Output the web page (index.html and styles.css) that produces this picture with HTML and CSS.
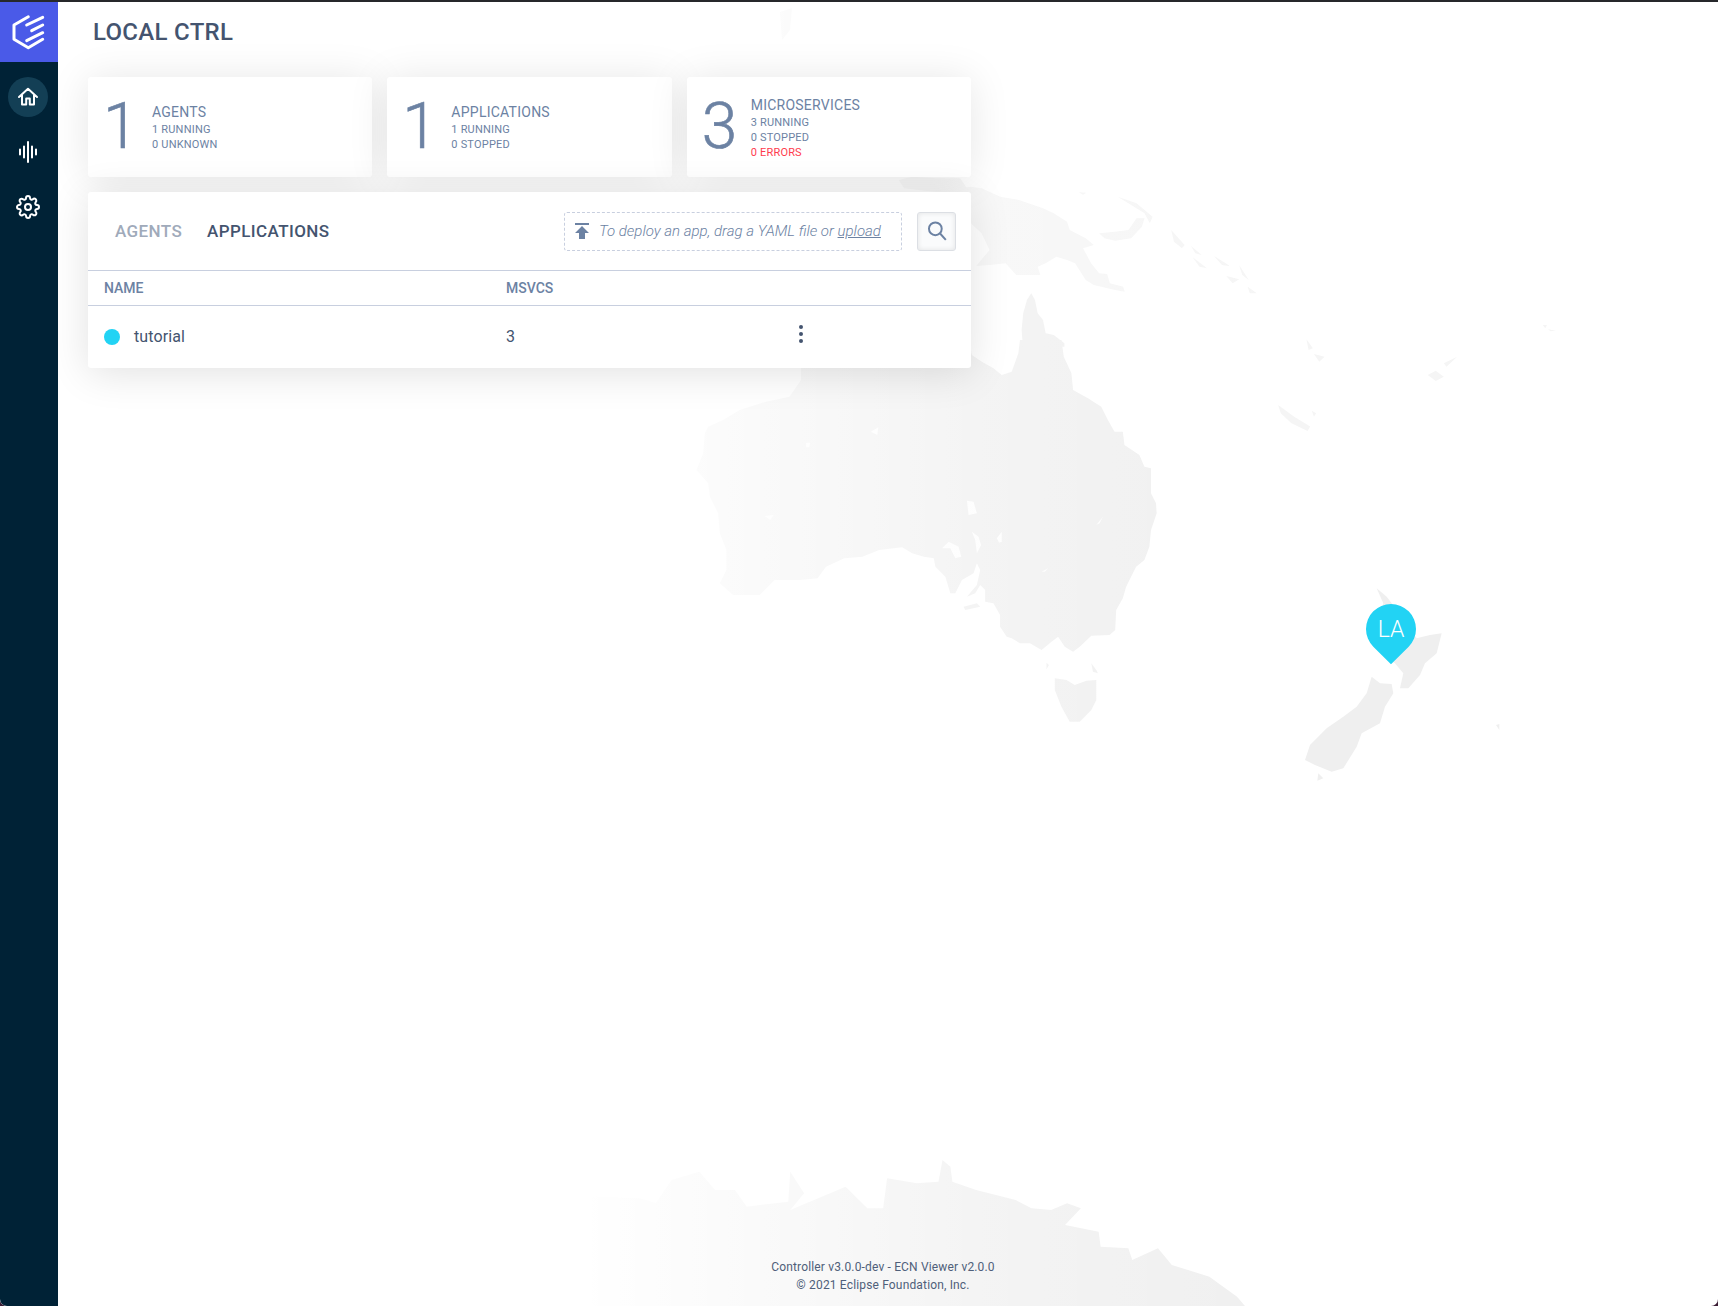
FILE: index.html
```html
<!DOCTYPE html>
<html lang="en">
<head>
  <meta charset="UTF-8">
  <title>ECN Viewer</title>
  <link rel="stylesheet" href="styles.css">
</head>
<body>

<div class="app">

  <!-- Sidebar -->
  <nav class="sidebar">
    <div class="logo">
      <svg width="58" height="60" viewBox="0 2 58 60">
        <path d="M28.3 16.7L14 25v14.3l14.3 8.4 14.4-8.4M26.7 25l16-7.7M31.7 30.7l11-5.7M26.7 40.7l16-8" />
      </svg>
    </div>
    <div class="nav-item active">
      <svg width="40" height="40" viewBox="0 0 40 40">
        <path d="M11 20l9-8.2 9 8.2M14 18v9.5h4.2v-6h3.6v6H26V18" />
      </svg>
    </div>
    <div class="nav-item">
      <svg width="40" height="40" viewBox="0 0 40 40">
        <path d="M12 17.5v5M16 14.500v11M20 10v20M24 14.500v11M28 17.500v5" />
      </svg>
    </div>
    <div class="nav-item">
      <svg width="24" height="24" viewBox="0 0 24 24">
        <circle cx="12" cy="12" r="3" />
        <path d="M19.4 15a1.65 1.65 0 0 0 .33 1.82l.06.06a2 2 0 0 1 0 2.83 2 2 0 0 1-2.83 0l-.06-.06a1.65 1.65 0 0 0-1.82-.33 1.65 1.65 0 0 0-1 1.51V21a2 2 0 0 1-2 2 2 2 0 0 1-2-2v-.09A1.65 1.65 0 0 0 9 19.4a1.65 1.65 0 0 0-1.82.33l-.06.06a2 2 0 0 1-2.83 0 2 2 0 0 1 0-2.83l.06-.06a1.65 1.65 0 0 0 .33-1.82 1.65 1.65 0 0 0-1.51-1H3a2 2 0 0 1-2-2 2 2 0 0 1 2-2h.09A1.65 1.65 0 0 0 4.600 9a1.65 1.65 0 0 0-.33-1.82l-.06-.06a2 2 0 0 1 0-2.83 2 2 0 0 1 2.83 0l.06.06a1.65 1.65 0 0 0 1.82.33H9a1.65 1.65 0 0 0 1-1.51V3a2 2 0 0 1 2-2 2 2 0 0 1 2 2v.09a1.65 1.65 0 0 0 1 1.51 1.65 1.65 0 0 0 1.82-.33l.06-.06a2 2 0 0 1 2.83 0 2 2 0 0 1 0 2.83l-.06.06a1.65 1.65 0 0 0-.33 1.82V9a1.65 1.65 0 0 0 1.51 1H21a2 2 0 0 1 2 2 2 2 0 0 1-2 2h-.09a1.65 1.65 0 0 0-1.51 1z" />
      </svg>
    </div>
  </nav>

  <!-- Map background -->
  <div class="map">
    <svg width="1718" height="1304" viewBox="0 2 1718 1304">
      <defs>
        <linearGradient id="landFade" gradientUnits="userSpaceOnUse" x1="580" y1="0" x2="1320" y2="0">
          <stop offset="0" stop-color="#fff" stop-opacity="1" />
          <stop offset="0.55" stop-color="#fff" stop-opacity="0.3" />
          <stop offset="1" stop-color="#fff" stop-opacity="0" />
        </linearGradient>
      </defs>

      <g class="land">
        <!-- Australia -->
        <g transform="translate(680 340) scale(.3317 .3333)">
          <polygon points="1150,0 1157,50 1180,100 1185,150 1230,175 1270,200 1290,240 1310,275 1335,275 1340,315 1385,345 1400,380 1420,385 1420,460 1435,490 1437,520 1420,570 1415,620 1400,660 1375,680 1345,740 1335,775 1315,810 1312,870 1295,885 1240,887 1205,920 1185,935 1160,920 1140,890 1120,905 1090,930 1055,910 1025,910 1000,895 985,890 965,860 965,825 945,790 920,785 920,750 905,735 890,760 865,770 895,735 905,690 895,670 885,700 850,720 830,760 815,760 800,710 770,680 765,655 735,650 700,640 670,622 600,630 550,650 495,655 440,680 415,715 360,720 285,720 240,765 160,765 120,730 140,690 140,630 120,580 115,520 90,470 85,430 50,390 70,340 75,280 85,260 130,240 180,210 260,185 330,170 365,120 365,85 365,0 870,0 880,45 910,65 945,85 970,105 1000,95 1020,40 1025,0" />
          <polygon points="855,800 895,790 905,800 860,810" />
          <polygon points="1105,968 1112,975 1105,988" />
          <polygon points="1240,970 1255,990 1260,1000 1245,995" />
          <!-- Tasmania -->
          <polygon points="1130,1015 1165,1020 1190,1035 1225,1022 1255,1020 1255,1080 1240,1110 1205,1145 1175,1145 1150,1100 1130,1050" />
          <!-- lakes -->
          <g class="lake">
            <polygon points="865,482 885,485 895,520 870,525" />
            <polygon points="880,575 900,590 908,615 895,640 890,600" />
            <polygon points="790,625 810,605 840,620 848,650 830,655 815,625" />
            <polygon points="575,275 598,262 595,285" />
            <polygon points="955,595 970,575 970,605 962,608" />
            <polygon points="255,528 282,525 272,540" />
            <polygon points="1090,695 1110,685 1100,695" />
            <polygon points="1255,555 1275,530 1265,550" />
            <polygon points="380,308 392,308 390,322 380,322" />
          </g>
        </g>

        <!-- Cape York -->
        <g transform="translate(880 0) scale(.5344 .3333)">
          <polygon points="283,880 290,900 295,940 305,960 310,1000 325,1005 345,1030 345,1040 267,1040 267,1030 265,990 268,940 275,900" />
        </g>

        <!-- New Guinea and the islands -->
        <g class="land-faint" transform="translate(880 0) scale(.5344 .3333)">
          <polygon points="170,560 190,565 225,590 260,600 305,625 325,640 350,665 355,690 385,715 400,735 380,745 395,790 410,820 425,822 430,850 455,860 458,875 440,870 400,855 385,840 365,790 350,780 330,770 310,790 295,800 300,825 255,825 235,790 205,795 180,798 205,750 190,700 170,670 100,700 100,575" />
          <polygon points="35,540 60,530 105,535 150,535 165,570 100,575 45,565" />
          <polygon points="410,700 440,695 465,690 480,655 495,655 490,680 470,715 440,722 420,715" />
          <polygon points="445,590 480,610 510,650 505,670 495,640 470,615" />
          <polygon points="372,577 386,578 380,584" />
          <polygon points="545,690 570,735 565,745 550,725" />
          <polygon points="582,738 602,765 590,760" />
          <polygon points="585,772 612,805 598,800" />
          <polygon points="625,768 655,798 640,795" />
          <polygon points="672,795 690,840 678,825" />
          <polygon points="648,828 672,838 660,850" />
          <polygon points="688,860 705,880 692,880" />
          <polygon points="745,1215 775,1250 805,1280 800,1293 770,1270 750,1240" />
          <polygon points="798,1018 810,1045 802,1050" />
          <polygon points="812,1062 832,1070 822,1085" />
          <polygon points="808,1232 816,1240 812,1250" />
          <polygon points="1025,1125 1040,1112 1055,1130 1040,1143" />
          <polygon points="1055,1090 1080,1070 1060,1100" />
          <polygon points="1240,975 1248,975 1245,985" />
          <polygon points="1250,988 1265,992 1255,994" />
        </g>

        <!-- New Zealand -->
        <g transform="translate(1260 560) scale(.3333)">
          <polygon points="350,85 380,110 395,130 470,235 510,225 545,220 530,280 495,310 480,345 445,385 420,385 430,340 405,310 390,300 350,200 370,130" />
          <polygon points="335,350 360,370 395,372 400,400 375,440 360,490 305,520 290,560 250,625 215,635 165,615 135,600 150,555 200,505 250,470 290,440 320,400" />
          <polygon points="175,640 190,655 172,662" />
          <polygon points="708,495 718,492 718,510" />
        </g>

        <!-- Antarctica -->
        <g transform="translate(640 1140) scale(.3954 .3333)">
          <polygon points="-120,498 -120,170 0,175 40,190 80,120 150,95 190,150 240,150 270,200 375,185 380,95 415,160 380,210 520,140 575,205 615,205 625,115 700,130 755,125 765,60 785,80 790,125 850,150 950,180 990,205 1040,210 1080,190 1115,205 1075,255 1160,275 1165,320 1235,325 1245,360 1310,325 1345,375 1440,410 1510,470 1530,498" />
        </g>

        <polygon class="land-faint" points="780,12 792,8 790,30 782,40" />
      </g>

      <rect x="0" y="0" width="1718" height="1306" fill="url(#landFade)" />
    </svg>

    <!-- LA marker -->
    <div class="pin"><span>LA</span></div>
  </div>

  <!-- Main -->
  <main class="main">
    <h1 class="title">LOCAL CTRL</h1>

    <section class="stats">
      <div class="stat-card">
        <div class="stat-num">1</div>
        <div class="stat-text">
          <div class="stat-label">Agents</div>
          <div class="stat-sub">1 running</div>
          <div class="stat-sub">0 unknown</div>
        </div>
      </div>
      <div class="stat-card">
        <div class="stat-num">1</div>
        <div class="stat-text">
          <div class="stat-label">Applications</div>
          <div class="stat-sub">1 running</div>
          <div class="stat-sub">0 stopped</div>
        </div>
      </div>
      <div class="stat-card">
        <div class="stat-num">3</div>
        <div class="stat-text">
          <div class="stat-label">Microservices</div>
          <div class="stat-sub">3 running</div>
          <div class="stat-sub">0 stopped</div>
          <div class="stat-sub error">0 errors</div>
        </div>
      </div>
    </section>

    <section class="panel">
      <div class="panel-head">
        <div class="tab">AGENTS</div>
        <div class="tab active">APPLICATIONS</div>
        <div class="dropzone">
          <svg width="24" height="24" viewBox="0 0 24 24">
            <path d="M5 4v2h14V4H5zm0 10h4v6h6v-6h4l-7-7-7 7z" />
          </svg>
          <span>To deploy an app, drag a YAML file or <u>upload</u></span>
        </div>
        <div class="search-btn">
          <svg width="22" height="22" viewBox="0 0 20 20">
            <circle cx="8.500" cy="8" r="5.800" />
            <path d="M12.800 12.300L18 18" />
          </svg>
        </div>
      </div>

      <div class="table-row table-head">
        <div>NAME</div>
        <div>MSVCS</div>
        <div></div>
      </div>
      <div class="table-row table-body">
        <div class="app-name"><span class="dot"></span>tutorial</div>
        <div>3</div>
        <div class="kebab">
          <i></i><i></i><i></i>
        </div>
      </div>
    </section>

    <footer class="footer">
      <div>Controller v3.0.0-dev - ECN Viewer v2.0.0</div>
      <div>© 2021 Eclipse Foundation, Inc.</div>
    </footer>
  </main>

</div>

</body>
</html>
```

FILE: styles.css
```css
* {
  box-sizing: border-box;
}

html, body {
  margin: 0;
  height: 1306px;
  overflow: hidden;
  background: #3b1c34;
}

body {
  font-family: Roboto, "Liberation Sans", sans-serif;
  color: #44546f;
}

.app {
  position: relative;
  display: flex;
  height: 100%;
  background: #fff;
  border-top: 2px solid #26282b;
  border-radius: 0 0 7px 7px;
  overflow: hidden;
}

/* Sidebar */
.sidebar {
  width: 58px;
  flex: none;
  background: #002236;
  display: flex;
  flex-direction: column;
  position: relative;
  z-index: 2;
}

.logo {
  width: 58px;
  height: 60px;
  background: #4a5ae8;
}

.logo svg {
  display: block;
  fill: none;
  stroke: #fff;
  stroke-width: 3;
  stroke-linecap: round;
  stroke-linejoin: round;
}

.nav-item {
  width: 40px;
  height: 40px;
  margin: 15px 0 0 8px;
  border-radius: 50%;
  display: flex;
  align-items: center;
  justify-content: center;
}

.nav-item.active {
  background: #133f55;
}

.nav-item svg {
  fill: none;
  stroke: #fff;
  stroke-width: 2;
  stroke-linecap: round;
  stroke-linejoin: round;
}

/* Map */
.map {
  position: absolute;
  top: 0;
  left: 0;
  width: 1718px;
  height: 1304px;
}

.map svg {
  display: block;
}

.land {
  fill: #efefef;
}

.land-faint {
  fill: #f5f5f5;
}

.lake {
  fill: #fdfdfd;
}

.pin {
  position: absolute;
  left: 1366px;
  top: 602px;
  width: 50px;
  height: 50px;
  display: flex;
  align-items: center;
  justify-content: center;
  color: #fff;
  font-size: 23px;
  font-weight: 300;
}

.pin::before {
  content: "";
  position: absolute;
  inset: 0;
  background: #22d3f4;
  border-radius: 50% 50% 0 50%;
  transform: rotate(45deg);
}

.pin span {
  position: relative;
}

/* Main */
.main {
  position: relative;
  z-index: 1;
  flex: 1;
  display: flex;
  flex-direction: column;
  padding-left: 30px;
}

.title {
  margin: 0 0 0 5px;
  height: 75px;
  padding-top: 15px;
  font-size: 24px;
  line-height: 30px;
  font-weight: 500;
  letter-spacing: 0.3px;
  color: #44546f;
}

.stats {
  display: flex;
  gap: 15px;
  width: 883px;
}

.stat-card {
  flex: 1;
  height: 100px;
  background: #fff;
  border-radius: 3px;
  box-shadow: 0 2px 40px rgba(0, 0, 0, 0.1);
  display: flex;
  align-items: center;
  padding-left: 15px;
}

.stat-num {
  width: 49px;
  font-size: 64px;
  font-weight: 300;
  line-height: 64px;
  color: #6c82a3;
  -webkit-text-stroke: 0.6px #6c82a3;
}

.stat-text {
  padding-top: 1px;
}

.stat-label {
  font-size: 14px;
  line-height: 19px;
  letter-spacing: 0.25px;
  text-transform: uppercase;
  color: #6c82a3;
}

.stat-sub {
  font-size: 11px;
  line-height: 15px;
  letter-spacing: 0.2px;
  text-transform: uppercase;
  color: #6c82a3;
}

.stat-sub.error {
  color: #ff3b4e;
}

/* Panel */
.panel {
  width: 883px;
  margin-top: 15px;
  background: #fff;
  border-radius: 3px;
  box-shadow: 0 5px 40px rgba(0, 0, 0, 0.12);
}

.panel-head {
  height: 78px;
  display: flex;
  align-items: center;
  padding: 0 15px 0 27px;
}

.tab {
  font-size: 17px;
  font-weight: 500;
  letter-spacing: 0.4px;
  color: #a0aaba;
  margin-right: 25px;
}

.tab.active {
  color: #44546f;
  margin-right: 0;
}

.dropzone {
  width: 338px;
  height: 39px;
  margin-left: auto;
  border: 1px dashed #c8cfdf;
  border-radius: 3px;
  display: flex;
  align-items: center;
  gap: 5px;
  padding-left: 5px;
  font-size: 15px;
  font-style: italic;
  font-weight: 300;
  color: #6c82a3;
}

.dropzone svg {
  fill: #6c82a3;
  flex: none;
}

.search-btn {
  width: 39px;
  height: 39px;
  margin-left: 15px;
  border: 1px solid #dcdfe4;
  border-radius: 3px;
  background: #fafbfc;
  box-shadow: inset 0 0 5px rgba(0, 0, 0, 0.1);
  display: flex;
  align-items: center;
  justify-content: center;
}

.search-btn svg {
  fill: none;
  stroke: #6c82a3;
  stroke-width: 1.8;
}

/* Table */
.table-row {
  display: grid;
  grid-template-columns: 402px 290px 1fr;
  align-items: center;
  padding-left: 16px;
}

.table-head {
  height: 36px;
  border-top: 1px solid #c8cfdf;
  border-bottom: 1px solid #c8cfdf;
  font-size: 14px;
  font-weight: 500;
  color: #6c82a3;
}

.table-body {
  height: 62px;
  padding-bottom: 1px;
  font-size: 16px;
  letter-spacing: 0.1px;
  color: #44546f;
}

.app-name {
  display: flex;
  align-items: center;
}

.dot {
  width: 16px;
  height: 16px;
  border-radius: 50%;
  background: #22d3f4;
  margin-right: 14px;
}

.kebab {
  display: flex;
  flex-direction: column;
  align-items: center;
  gap: 3px;
  width: 10px;
  margin-top: -6px;
}

.kebab i {
  width: 4px;
  height: 4px;
  border-radius: 50%;
  background: #44546f;
}

/* Footer */
.footer {
  margin-top: auto;
  padding: 0 40px 12px 0;
  text-align: center;
  font-size: 12px;
  line-height: 18px;
  letter-spacing: 0.16px;
  color: #4f5f7a;
}
```
